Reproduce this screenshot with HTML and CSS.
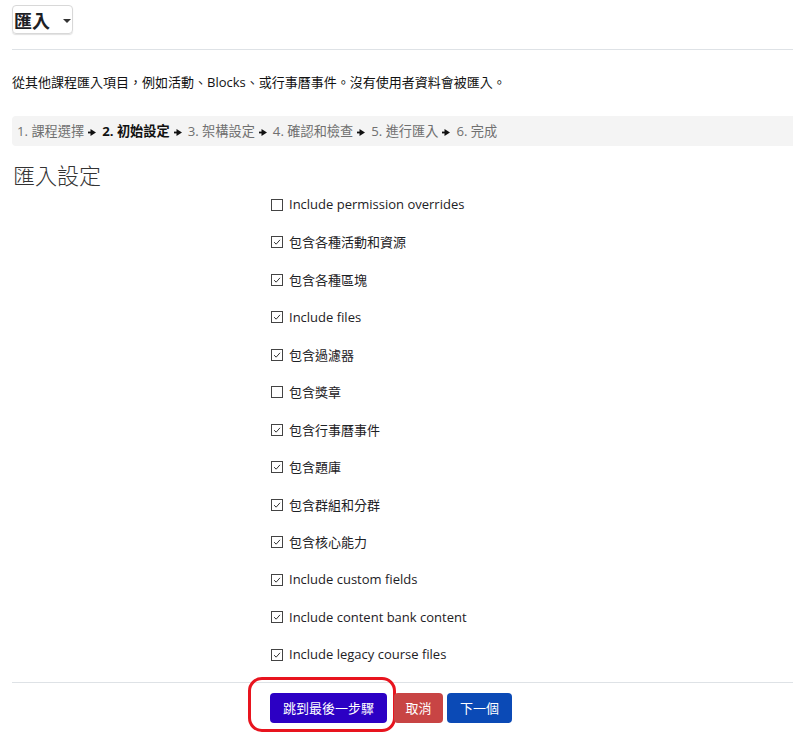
FILE: index.html
```html
<!DOCTYPE html>
<html lang="zh-Hant">
<head>
<meta charset="utf-8">
<link rel="stylesheet" href="styles.css">
</head>
<body>
<div class="page">
  <div class="topbar">
    <div class="selector">
      <span class="selector-text">匯入</span>
      <span class="caret"></span>
    </div>
  </div>
  <p class="desc">從其他課程匯入項目，例如活動、Blocks、或行事曆事件。沒有使用者資料會被匯入。</p>
  <div class="steps">
    <span>1. 課程選擇</span><svg class="arrow" viewBox="0 0 8 7"><rect x="0" y="2.6" width="3" height="1.8"/><path d="M2.5 0 L8 3.5 L2.5 7 Z"/></svg><b class="current">2. 初始設定</b><svg class="arrow" viewBox="0 0 8 7"><rect x="0" y="2.6" width="3" height="1.8"/><path d="M2.5 0 L8 3.5 L2.5 7 Z"/></svg><span>3. 架構設定</span><svg class="arrow" viewBox="0 0 8 7"><rect x="0" y="2.6" width="3" height="1.8"/><path d="M2.5 0 L8 3.5 L2.5 7 Z"/></svg><span>4. 確認和檢查</span><svg class="arrow" viewBox="0 0 8 7"><rect x="0" y="2.6" width="3" height="1.8"/><path d="M2.5 0 L8 3.5 L2.5 7 Z"/></svg><span>5. 進行匯入</span><svg class="arrow" viewBox="0 0 8 7"><rect x="0" y="2.6" width="3" height="1.8"/><path d="M2.5 0 L8 3.5 L2.5 7 Z"/></svg><span>6. 完成</span>
  </div>
  <h2 class="heading">匯入設定</h2>
  <div class="options">
    <div class="opt"><span class="box"></span><span class="lbl">Include permission overrides</span></div>
    <div class="opt"><span class="box checked"><svg viewBox="0 0 12 12"><path d="M2.5 6.2 L5 8.6 L9.6 3.4"/></svg></span><span class="lbl">包含各種活動和資源</span></div>
    <div class="opt"><span class="box checked"><svg viewBox="0 0 12 12"><path d="M2.5 6.2 L5 8.6 L9.6 3.4"/></svg></span><span class="lbl">包含各種區塊</span></div>
    <div class="opt"><span class="box checked"><svg viewBox="0 0 12 12"><path d="M2.5 6.2 L5 8.6 L9.6 3.4"/></svg></span><span class="lbl">Include files</span></div>
    <div class="opt"><span class="box checked"><svg viewBox="0 0 12 12"><path d="M2.5 6.2 L5 8.6 L9.6 3.4"/></svg></span><span class="lbl">包含過濾器</span></div>
    <div class="opt"><span class="box"></span><span class="lbl">包含獎章</span></div>
    <div class="opt"><span class="box checked"><svg viewBox="0 0 12 12"><path d="M2.5 6.2 L5 8.6 L9.6 3.4"/></svg></span><span class="lbl">包含行事曆事件</span></div>
    <div class="opt"><span class="box checked"><svg viewBox="0 0 12 12"><path d="M2.5 6.2 L5 8.6 L9.6 3.4"/></svg></span><span class="lbl">包含題庫</span></div>
    <div class="opt"><span class="box checked"><svg viewBox="0 0 12 12"><path d="M2.5 6.2 L5 8.6 L9.6 3.4"/></svg></span><span class="lbl">包含群組和分群</span></div>
    <div class="opt"><span class="box checked"><svg viewBox="0 0 12 12"><path d="M2.5 6.2 L5 8.6 L9.6 3.4"/></svg></span><span class="lbl">包含核心能力</span></div>
    <div class="opt"><span class="box checked"><svg viewBox="0 0 12 12"><path d="M2.5 6.2 L5 8.6 L9.6 3.4"/></svg></span><span class="lbl">Include custom fields</span></div>
    <div class="opt"><span class="box checked"><svg viewBox="0 0 12 12"><path d="M2.5 6.2 L5 8.6 L9.6 3.4"/></svg></span><span class="lbl">Include content bank content</span></div>
    <div class="opt"><span class="box checked"><svg viewBox="0 0 12 12"><path d="M2.5 6.2 L5 8.6 L9.6 3.4"/></svg></span><span class="lbl">Include legacy course files</span></div>
  </div>
  <div class="actions">
    <div class="highlight">
      <button class="btn btn-final">跳到最後一步驟</button>
    </div>
    <button class="btn btn-cancel">取消</button>
    <button class="btn btn-next">下一個</button>
  </div>
</div>
</body>
</html>
```
FILE: styles.css
```css
html, body {
  margin: 0;
  padding: 0;
  background: #fff;
}
body {
  font-family: "Open Sans", "Noto Sans CJK TC", sans-serif;
  font-size: 13px;
  color: #1d2125;
}
.page {
  padding-left: 12px;
  overflow: hidden;
}
.topbar {
  height: 50px;
  border-bottom: 1px solid #dee2e6;
  padding-top: 5px;
  box-sizing: border-box;
}
.selector {
  display: inline-flex;
  align-items: center;
  width: 61px;
  height: 29px;
  box-sizing: border-box;
  border: 1px solid #d8d8d8;
  border-radius: 4px;
  box-shadow: 0 1px 1px rgba(0,0,0,0.12);
  padding-left: 1px;
}
.selector-text {
  font-family: "Noto Sans CJK TC", sans-serif;
  font-weight: 700;
  font-size: 18px;
  color: #1d2125;
  line-height: 1;
}
.caret {
  width: 0;
  height: 0;
  border-left: 4px solid transparent;
  border-right: 4px solid transparent;
  border-top: 4px solid #333;
  margin-left: 13px;
  margin-top: 2px;
}
.desc {
  margin: 0;
  height: 66px;
  line-height: 64px;
  font-size: 13px;
  color: #111;
}
.steps {
  background: #f4f4f4;
  height: 30px;
  line-height: 30px;
  padding-left: 5px;
  color: #707070;
  font-size: 13.2px;
  border-radius: 4px 0 0 4px;
}
.steps .arrow {
  width: 8px;
  height: 7px;
  fill: #111;
  margin: 0 6px 0 4px;
  vertical-align: 0px;
}
.steps .current {
  color: #111;
  font-weight: 700;
}
.heading {
  margin: 14px 0 0;
  height: 28px;
  line-height: 28px;
  font-weight: 300;
  font-size: 22px;
  color: #333;
  font-family: "Noto Sans CJK TC", sans-serif;
  padding-left: 1px;
}
.options {
  padding-left: 259px;
  margin-top: -2.75px;
}
.opt {
  height: 37.5px;
  display: flex;
  align-items: center;
}
.box {
  width: 12px;
  height: 12px;
  box-sizing: border-box;
  border: 1px solid #444;
  display: inline-flex;
  margin-right: 6px;
  margin-top: 1px;
}
.box svg {
  width: 10px;
  height: 10px;
  fill: none;
  stroke: #333;
  stroke-width: 1.2;
}
.lbl {
  color: #1d2125;
  font-size: 13px;
}
.actions {
  margin-top: 9px;
  border-top: 1px solid #dee2e6;
  display: flex;
  align-items: flex-start;
  padding-left: 236px;
  height: 62px;
  box-sizing: border-box;
}
.highlight {
  margin-top: -6px;
  border: 3.5px solid #e8141e;
  border-radius: 14px;
  padding: 13px 6px 6px 19px;
  height: 55px;
  box-sizing: border-box;
  margin-right: -2px;
}
.btn {
  font-family: "Noto Sans CJK TC", sans-serif;
  font-size: 13px;
  color: #fff;
  border: none;
  border-radius: 4px;
  height: 30px;
  margin-top: 10px;
  cursor: pointer;
}
.highlight .btn {
  margin-top: 0;
}
.btn-final {
  background: #2c00c4;
  width: 117px;
}
.btn-cancel {
  background: #c84444;
  width: 49px;
  margin-left: 0;
}
.btn-next {
  background: #0b4ab6;
  width: 65px;
  margin-left: 4px;
}
```
